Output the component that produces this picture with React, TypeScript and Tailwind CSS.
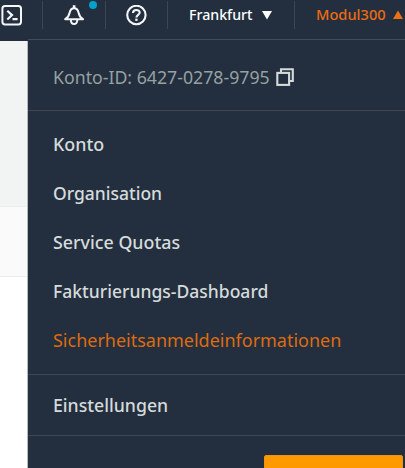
import React from "react";

type LabelProps = { children: string; className: string };

function Label({ children, className }: LabelProps) {
  return <span className={`inline-block origin-left whitespace-nowrap ${className}`}>{children}</span>;
}

function Separator() {
  return <div className="mt-[1px] h-7 w-px shrink-0 bg-[#3c4650]" />;
}

function ShellIcon() {
  return (
    <svg width="21" height="21" viewBox="0 0 21 21" fill="none" stroke="#f5f6f7" strokeWidth="2">
      <rect x="1.4" y="1" width="18.6" height="18.4" rx="2.6" />
      <path d="M6.3 5.7L11 10.1L6.3 14.5M11.5 14.1H16.6" strokeWidth="2.2" />
    </svg>
  );
}

function BellIcon() {
  return (
    <svg width="21" height="21" viewBox="0 0 21 21" fill="none" stroke="#f5f6f7" strokeWidth="2" strokeLinejoin="round">
      <path d="M10.1 0.2V3.6" strokeWidth="2.6" />
      <path d="M1.2 14.2C4.4 12.4 5 11 5.6 7.8C6.2 4.8 7.6 3.2 10.1 3.2C12.6 3.2 14 4.8 14.6 7.8C15.2 11 15.8 12.4 19 14.2Z" />
      <path d="M6.9 14.8C6.9 20.5 13.3 20.5 13.3 14.8" />
    </svg>
  );
}

function HelpIcon() {
  return (
    <svg width="21" height="21" viewBox="0 0 21 21" fill="none" stroke="#f5f6f7" strokeWidth="2.1">
      <circle cx="10.4" cy="10" r="9.2" />
      <path d="M7 8C7 3.9 13.7 4.1 13.7 7.6C13.7 9.9 10.4 9.9 10.4 12.5" />
      <path d="M10.4 13.6V15.9" strokeWidth="2.3" />
    </svg>
  );
}

function CopyIcon() {
  return (
    <svg width="18" height="18" viewBox="0 0 18 18" fill="none" stroke="#d5dbdb" strokeWidth="2.1">
      <path d="M5 4.6V1.3H16.8V13H13.5" />
      <rect x="1.3" y="4.9" width="11.8" height="12" />
    </svg>
  );
}

const links = [
  { text: "Konto", style: "scale-x-[0.995] font-medium text-[#d5dbdb]" },
  { text: "Organisation", style: "scale-x-[0.972] font-medium text-[#d5dbdb]" },
  { text: "Service Quotas", style: "scale-x-[0.99] font-medium text-[#d5dbdb]" },
  { text: "Fakturierungs-Dashboard", style: "scale-x-[0.974] font-medium text-[#d5dbdb]" },
  { text: "Sicherheitsanmeldeinformationen", style: "scale-x-[0.999] text-[#dd6b10]" },
];

export default function App() {
  return (
    <div className="flex h-[468px] w-[405px] flex-col overflow-hidden bg-white font-['Noto_Sans','Open_Sans',sans-serif]">
      <header className="flex h-[41px] shrink-0 bg-[#232f3e] text-[15px] leading-[29px] font-medium text-white">
        <div className="w-[42px] shrink-0 pt-[5px] pl-px"><ShellIcon /></div>
        <Separator />
        <div className="relative w-[62px] shrink-0 pt-[5px] pl-[21px]">
          <BellIcon />
          <span className="absolute top-[1px] left-[46px] h-2 w-2 rounded-full bg-[#00a1c9]" />
        </div>
        <Separator />
        <div className="w-[61px] shrink-0 pt-[5px] pl-[20px]"><HelpIcon /></div>
        <Separator />
        <div className="flex w-[126px] shrink-0 pl-[21px]">
          <div className="w-[73px]"><Label className="scale-x-[0.945]">Frankfurt</Label></div>
          <svg className="mt-[11px]" width="10" height="9" viewBox="0 0 10 9"><path d="M0 0H10L5 8.5Z" fill="white" /></svg>
        </div>
        <Separator />
        <div className="flex shrink-0 pl-[21px] text-[#ec6b12]">
          <div className="w-[77px]"><Label className="scale-x-[0.975]">Modul300</Label></div>
          <svg className="mt-[10px]" width="10" height="9" viewBox="0 0 10 9"><path d="M0 9H10L5 0.5Z" fill="#ec7211" /></svg>
        </div>
      </header>
      <div className="flex min-h-0 flex-1">
        <aside className="w-7 shrink-0 border-r border-[#b6babf] bg-white">
          <div className="h-[166px] border-b border-[#eaeded] bg-[#f2f3f3]" />
          <div className="h-[70px] border-b border-[#eaeded] bg-[#fafafa]" />
        </aside>
        <nav className="-mt-0.5 flex flex-1 flex-col border-t border-[#414a55] bg-[#232f3e] text-lg">
          <div className="flex h-[71px] shrink-0 items-center border-b border-[#414750] pl-[25px] pt-1 text-[#95a1a3]">
            <div className="w-[223px]"><Label className="scale-x-[0.984]">Konto-ID: 6427-0278-9795</Label></div>
            <CopyIcon />
          </div>
          <div className="flex h-[264px] shrink-0 flex-col border-b border-[#414750] pt-[9px] pl-[25px]">
            {links.map((link) => (
              <a key={link.text} className="flex h-[48.8px] shrink-0 items-center"><Label className={link.style}>{link.text}</Label></a>
            ))}
          </div>
          <div className="flex h-[61px] shrink-0 items-center border-b border-[#414750] pl-[25px]">
            <Label className="scale-x-[0.982] font-medium text-[#d5dbdb]">Einstellungen</Label>
          </div>
          <div className="flex flex-1 justify-end overflow-hidden pt-[19px] pr-[2px]">
            <div className="h-10 w-[139px] rounded-[2px] border border-[#ec9417] bg-[#ff9900]" />
          </div>
        </nav>
      </div>
    </div>
  );
}
